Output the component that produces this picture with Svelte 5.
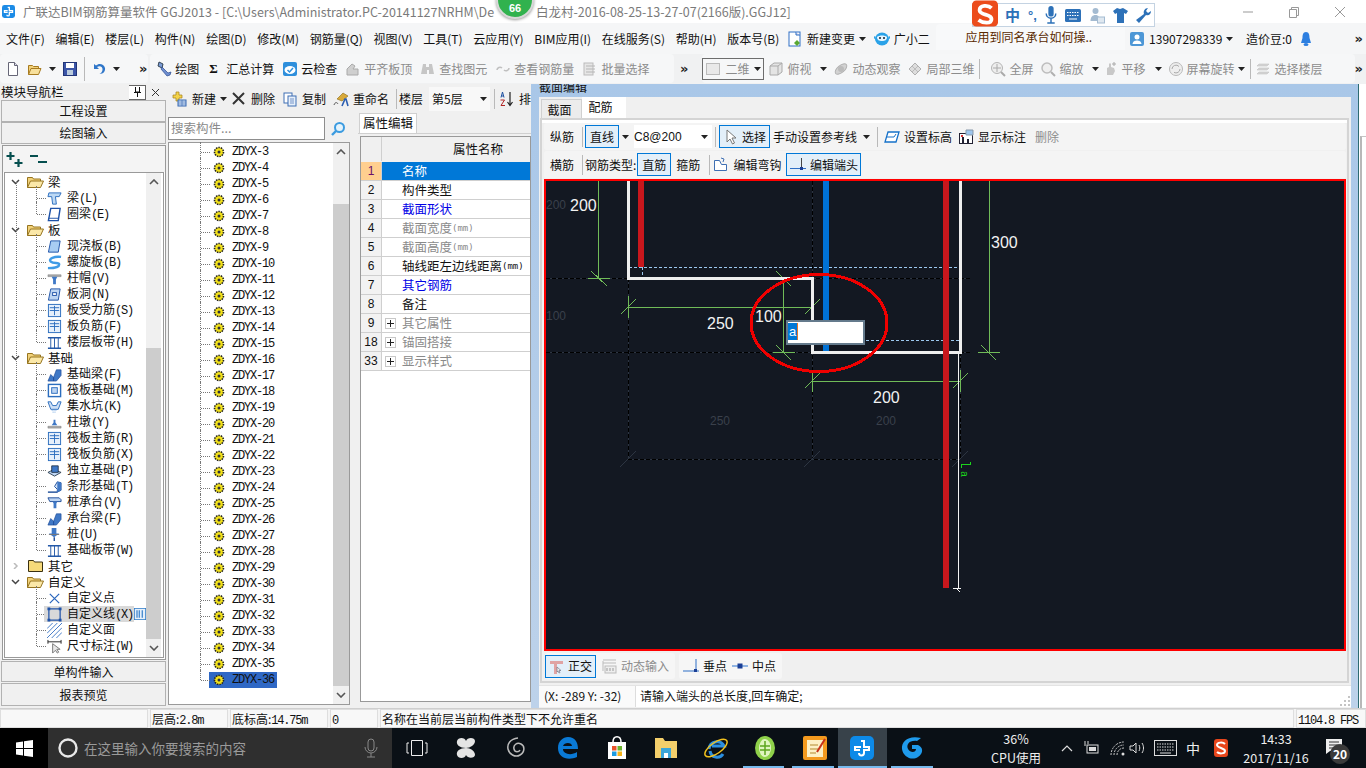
<script>
  const icons = {
    doc: '<path d="M3.500 1.500h6l3 3v10h-9z" fill="#fff" stroke="#667"/><path d="M9.500 1.500v3h3" fill="#dde" stroke="#667"/>',
    open: '<path d="M1.500 13.500v-9h4l1 1h5v2" fill="#f2d27a" stroke="#a77b20"/><path d="M1.500 13.500l2.500-6h10l-2.500 6z" fill="#f7e09c" stroke="#a77b20"/>',
    save: '<rect x="1.500" y="1.500" width="13" height="13" fill="#3b55a8" stroke="#223577"/><rect x="4" y="2" width="8" height="5" fill="#fff"/><rect x="5" y="9" width="6" height="5" fill="#bcd"/>',
    undo: '<path d="M3 3v5h5L6 6c3-2 6 0 5.500 3-.3 2-1.500 3-3 4 4 0 6-3 5.500-6C13 3 8 1.500 5 4.500z" fill="#2f76c9"/>',
    draw: '<path d="M3 1l4 2-1 4-4-2z" fill="#7a9bd6" stroke="#345"/><path d="M6 6l6 6 3-1-1 3-3 1-6-7z" fill="#6f8fd0" stroke="#2a4a90" stroke-width=".7"/>',
    cloudchk: '<rect x="1" y="1" width="14" height="14" rx="2" fill="#2e8fdc"/><ellipse cx="8" cy="9" rx="5.500" ry="4" fill="#fff"/><path d="M5.500 9l2 2 3.500-4" stroke="#2e8fdc" stroke-width="1.500" fill="none"/>',
    g1: '<path d="M2 14V8l5-5 3 2-2 3h5v6z" fill="#cfcfcf" stroke="#aaa"/>',
    binoc: '<path d="M3 3h3v3h3V3h3l2 10H9V9H7v4H1z" fill="#c6c6c6"/>',
    link: '<path d="M2 9a3 3 0 0 1 5-2M14 7a3 3 0 0 1-5 2" stroke="#c0c0c0" stroke-width="1.600" fill="none"/>',
    batch: '<rect x="2" y="2" width="9" height="12" fill="#e6e6e6" stroke="#bbb"/><path d="M4 5h9M4 8h9M4 11h9" stroke="#b6b6b6"/>',
    cube: '<path d="M2 5l4-3h8v9l-4 3H2z" fill="#e4e4e4" stroke="#aaa"/><path d="M2 5h8v9M10 5l4-3" stroke="#aaa" fill="none"/>',
    orbit: '<ellipse cx="8" cy="8" rx="7" ry="3.500" transform="rotate(-40 8 8)" fill="#d2d2d2" stroke="#b2b2b2"/><circle cx="8" cy="8" r="3" fill="#bbb"/>',
    local: '<path d="M2 8l6-6 6 6-6 6z" fill="#ddd" stroke="#b0b0b0"/><path d="M5 5l6 6M11 5l-6 6" stroke="#bbb"/>',
    zoomall: '<circle cx="7" cy="7" r="5.500" fill="#eee" stroke="#b5b5b5"/><path d="M7 3v8M3 7h8" stroke="#aaa"/><path d="M11 11l4 4" stroke="#aaa" stroke-width="2"/>',
    zoom: '<circle cx="7" cy="7" r="5" fill="#efefef" stroke="#bdbdbd" stroke-width="1.500"/><path d="M11 11l4 4" stroke="#b0b0b0" stroke-width="2"/>',
    pan: '<path d="M5 14V7l2-1V3l1-1 1 1v3l3 1 1 3-2 4z" fill="#c8c8c8"/><path d="M12 1v4M10 3h4" stroke="#aaa"/>',
    rotate: '<circle cx="8" cy="8" r="6.500" fill="#eee" stroke="#b9b9b9"/><path d="M4 8a4 4 0 0 1 7-2.500M12 8a4 4 0 0 1-6 3.400" stroke="#aaa" fill="none"/>',
    floors: '<path d="M3 3h10l-2 2H1zM3 7h10l-2 2H1zM3 11h10l-2 2H1z" fill="#d6d6d6" stroke="#bbb" stroke-width=".5"/>',
    plusbox: '<path d="M5 1h3v3h3v3H8v3H5V7H2V4h3z" fill="#f3d34a" stroke="#a3801a" stroke-width=".7"/><rect x="7" y="9" width="8" height="6" fill="#cfe0f5" stroke="#3566b0"/><path d="M7 11h8M7 13h8M11 9v6" stroke="#3566b0" stroke-width=".6"/>',
    copy: '<rect x="2" y="2" width="8" height="10" fill="#fff" stroke="#3f6fb3"/><rect x="6" y="5" width="8" height="10" fill="#e6effa" stroke="#3f6fb3"/><path d="M8 8h4M8 10h4M8 12h4" stroke="#3f6fb3" stroke-width=".7"/>',
    rename: '<path d="M4 8l6-6 5 3-6 5z" fill="#d8a93a" stroke="#8a6a14" stroke-width=".6"/><path d="M9 15l3-7h1l2 7" fill="none" stroke="#2a5db0" stroke-width="1.600"/><path d="M1 14c1-3 3-3 4-1" stroke="#555" fill="none"/>',
    sort: '<path d="M5 6.500L3.500 1 2 6.500M2.500 5h2" stroke="#1c4fa0" fill="none"/><path d="M1.500 9h4L2 14.500h4" stroke="#b02323" fill="none"/><path d="M11 1v13M8.500 11l2.500 3.500 2.500-3.500" stroke="#222" fill="none" stroke-width="1.200"/>',
    cursor: '<path d="M4 1v12l3-3 2.500 5 2-1L9 9h4z" fill="#fff" stroke="#777"/>',
    level: '<path d="M4 3h11l-3 10H1z" fill="#fff" stroke="#1671c9" stroke-width="1.300"/><path d="M3 8h7l2-3" stroke="#1671c9" fill="none"/>',
    label: '<rect x="1.500" y="4.500" width="13" height="10" fill="#fff" stroke="#223"/><path d="M5 8v6M10 10v4" stroke="#223" stroke-width="2"/><rect x="3" y="6" width="2" height="2" fill="#d33"/><path d="M8 1h7v5H8z" fill="#9ec6ee" stroke="#89a"/>',
    hook: '<path d="M1.500 3.500h5l2 4h5v6h-12z" fill="#fff" stroke="#3f6fb3"/><path d="M8 1l3 1-1 3" fill="none" stroke="#3f6fb3"/>',
    endcap: '<path d="M0 11.500h16" stroke="#2f6fc5"/><path d="M11.500 1v11" stroke="#444"/><rect x="10" y="10" width="3" height="3" fill="#1a3f96"/>',
    orth: '<path d="M1 3h13v3H8v10H5V6H1z" fill="#e0a3a3"/><path d="M8 9v5l1-1 1 2 1-.5-1-2h2z" fill="#eee" stroke="#778" stroke-width=".7"/>',
    dyn: '<path d="M2 2h13M2 5h13" stroke="#bbb"/><rect x="4" y="8" width="11" height="7" fill="#eee" stroke="#bbb"/><path d="M6 10v3M9 10v3M12 10v3" stroke="#999"/><path d="M2 3v10" stroke="#bbb"/>',
    perp: '<path d="M0 13h16" stroke="#2f6fc5"/><path d="M13 1v12" stroke="#2f6fc5"/><rect x="11" y="11" width="3" height="3" fill="#1a3f96"/>',
    mid: '<path d="M0 8h16" stroke="#6f9fdc" stroke-width="1.500"/><rect x="5.500" y="5.500" width="5" height="5" fill="#1a3f96"/>',
    note: '<rect x="2" y="1" width="11" height="14" fill="#fff" stroke="#2f6fc5"/><path d="M9 1v3h4" fill="#dde" stroke="#2f6fc5"/><path d="M10 9l3 3-3 3-3-3z" fill="#5aa832"/>',
    xiaoer: '<ellipse cx="8" cy="8" rx="7" ry="6.500" fill="#2aa2e8"/><path d="M3 6c2-2 8-2 10 0 0 3-2 4-5 4S3 9 3 6z" fill="#e7f6ff"/><circle cx="6" cy="7" r="1" fill="#123"/><circle cx="10" cy="7" r="1" fill="#123"/><path d="M1 8L0 5M15 8l1-3" stroke="#2aa2e8"/>',
    user: '<rect x="1" y="1" width="14" height="14" rx="2" fill="#4d97d6"/><circle cx="8" cy="6" r="2.500" fill="#fff"/><path d="M3.500 13c.5-3 2.500-3.500 4.500-3.500S12 10 12.500 13z" fill="#fff"/>',
    bell: '<path d="M8 1c3 0 3.500 3 3.500 6l1.500 5H3l1.500-5C4.500 4 5 1 8 1z" fill="#2d7fe0"/><ellipse cx="8" cy="13.500" rx="2.500" ry="1.500" fill="#2d7fe0"/>',
    // nav tree
    beam: '<path d="M2 2h13l-2 4H9l1 8H6L5 6H1z" fill="#bcd8f4" stroke="#2b6dbe"/>',
    ring: '<path d="M4 1.500h10l-2 13H1.500z" fill="#fff" stroke="#1e52a8" stroke-width="1.500"/><path d="M1.500 12h11" stroke="#1e52a8"/>',
    slab: '<path d="M4 2h10l-2 12H1.500z" fill="#a8ccf2" stroke="#1e52a8"/>',
    spiral: '<path d="M15 2C8 1 1 4 4 7s9 0 9 3-7 4-12 4" stroke="#3f9be6" stroke-width="2.600" fill="none"/>',
    cap: '<path d="M1 4h14v2H1z" fill="#aaa" stroke="#777" stroke-width=".5"/><path d="M5 6h6l-1.500 3h-3zM6.500 9h3v5h-3z" fill="#3f78c6"/>',
    hole: '<path d="M4 2h10l-2 12H1.500z" fill="#bcd4f2" stroke="#1e52a8"/><rect x="6" y="6" width="4" height="3" fill="#fff" stroke="#1e52a8"/>',
    grid: '<rect x="1.500" y="1.500" width="13" height="13" fill="#e5effb" stroke="#2b6dbe"/><path d="M8 3v10M3 8h10M3 5h10" stroke="#2b6dbe"/>',
    band: '<path d="M1 3h14M1 14h14" stroke="#2459a8" stroke-width="1.600"/><path d="M4 3v11M8 3v11M12 3v11" stroke="#2459a8"/>',
    fbeam: '<path d="M1 15l3-7 3 3V15zM7 11l3-8h5v6l-5 6H7z" fill="#3f78c6" stroke="#1e4d99" stroke-width=".7"/>',
    raft: '<rect x="1.500" y="1.500" width="13" height="13" fill="#fff" stroke="#2b6dbe" stroke-width="1.500"/><rect x="5" y="5" width="6" height="6" fill="#bcd4f2" stroke="#2b6dbe"/>',
    pit: '<path d="M1 3h3l2 4h4l2-4h3l-3 8H4z" fill="#cfe0f5" stroke="#2b6dbe"/><path d="M5 12h6M6 14h4" stroke="#6aa0de" stroke-dasharray="1 1"/>',
    pier: '<path d="M1 12h14v2H1z" fill="#aaa" stroke="#777" stroke-width=".5"/><path d="M5 11l2-3V5h2v3l2 3z" fill="#3f78c6"/>',
    iso: '<path d="M1 10l6-3 8 3-7 4z" fill="#bcd4f2" stroke="#345"/><path d="M5 3h7v7H5z" fill="#3f78c6" stroke="#123" stroke-width=".8"/>',
    strip: '<path d="M1 14h10v-3L8 8l3-5 4 1v8l-4 2z" fill="#cfe0f5" stroke="#1e4d99"/><path d="M11 3l4 1v8l-4 2z" fill="#3f78c6"/>',
    ptcap: '<path d="M1 3h12l2 2v2H3z" fill="#bcd4f2" stroke="#1e4d99"/><path d="M6 7h5l-1 2H7zM7 9h3v5H7z" fill="#3f78c6"/>',
    pile: '<path d="M5 1h5v6h3l-5.500 4L2 7h3z" fill="#3f78c6"/><path d="M7 11h1.500v4H7z" fill="#1e4d99"/><path d="M2 8h11" stroke="#777"/>',
    point: '<path d="M3 3l10 10M13 3L3 13" stroke="#2a66bd" stroke-width="1.300"/>',
    line: '<rect x="2" y="2" width="12" height="12" fill="none" stroke="#1e52a8" stroke-width="1.300"/><g fill="#1e52a8"><rect x="0.500" y=".5" width="3" height="3"/><rect x="12.500" y=".5" width="3" height="3"/><rect x=".5" y="12.500" width="3" height="3"/><rect x="12.500" y="12.500" width="3" height="3"/></g>',
    hatch: '<path d="M0 6l6-6M0 11L11 0M0 16L16 0M5 16L16 5M10 16l6-6" stroke="#3f78c6"/>',
    dim: '<path d="M1 1v4M15 1v4M1 3h14" stroke="#222"/><path d="M6 5v10l3-3 2 3 1.500-1-2-3h3.500z" fill="#e8e8e8" stroke="#777"/>',
    side: '<rect x=".5" y=".5" width="15" height="15" fill="#e6f0fb" stroke="#2a78c6"/><path d="M4 3v10M11 3v10M7 3v10" stroke="#2a78c6" stroke-width="1.500"/>'
  };

  const menus = ['文件(F)','编辑(E)','楼层(L)','构件(N)','绘图(D)','修改(M)','钢筋量(Q)','视图(V)','工具(T)','云应用(Y)','BIM应用(I)','在线服务(S)','帮助(H)','版本号(B)'];

  // ml = gap to the previous item, as measured on the reference
  const leftTools = [
    { ic: 'draw', t: '绘图', ml: 6 },
    { sig: true, t: '汇总计算', ml: 10 },
    { ic: 'cloudchk', t: '云检查', ml: 8 },
    { ic: 'g1', t: '平齐板顶', off: true, ml: 8 },
    { ic: 'binoc', t: '查找图元', off: true, ml: 8 },
    { ic: 'link', t: '查看钢筋量', off: true, ml: 8 },
    { ic: 'batch', t: '批量选择', off: true, ml: 8 }
  ];
  const rightTools = [
    { ic: 'cube', t: '俯视', off: true, ml: 4, drop: true },
    { ic: 'orbit', t: '动态观察', off: true, ml: 6 },
    { ic: 'local', t: '局部三维', off: true, ml: 7 },
    { sep: true },
    { ic: 'zoomall', t: '全屏', off: true, ml: 5 },
    { ic: 'zoom', t: '缩放', off: true, ml: 7, drop: true },
    { ic: 'pan', t: '平移', off: true, ml: 3, drop: true },
    { ic: 'rotate', t: '屏幕旋转', off: true, ml: 6, drop: true, tight: true },
    { sep: true },
    { ic: 'floors', t: '选择楼层', off: true, ml: 0 }
  ];

  const groups = [
    { name: '梁', open: true, line: true, kids: [['beam','梁','(L)'],['ring','圈梁','(E)']] },
    { name: '板', open: true, line: true, kids: [['slab','现浇板','(B)'],['spiral','螺旋板','(B)'],['cap','柱帽','(V)'],['hole','板洞','(N)'],['grid','板受力筋','(S)'],['grid','板负筋','(F)'],['band','楼层板带','(H)']] },
    { name: '基础', open: true, line: true, kids: [['fbeam','基础梁','(F)'],['raft','筏板基础','(M)'],['pit','集水坑','(K)'],['pier','柱墩','(Y)'],['grid','筏板主筋','(R)'],['grid','筏板负筋','(X)'],['iso','独立基础','(P)'],['strip','条形基础','(T)'],['ptcap','桩承台','(V)'],['fbeam','承台梁','(F)'],['pile','桩','(U)'],['band','基础板带','(W)']] },
    { name: '其它', open: false, kids: [] },
    { name: '自定义', open: true, kids: [['point','自定义点',''],['line','自定义线','(X)'],['hatch','自定义面',''],['dim','尺寸标注','(W)']] }
  ];

  const zdyx = Array.from({ length: 34 }, (_, i) => 'ZDYX-' + (i + 3));

  const props = [
    { n: 1, t: '名称', sel: true },
    { n: 2, t: '构件类型' },
    { n: 3, t: '截面形状', c: 'blue' },
    { n: 4, t: '截面宽度', u: '(mm)', c: 'grey' },
    { n: 5, t: '截面高度', u: '(mm)', c: 'grey' },
    { n: 6, t: '轴线距左边线距离', u: '(mm)' },
    { n: 7, t: '其它钢筋', c: 'blue' },
    { n: 8, t: '备注' },
    { n: 9, t: '其它属性', c: 'grey', plus: true },
    { n: 18, t: '锚固搭接', c: 'grey', plus: true },
    { n: 33, t: '显示样式', c: 'grey', plus: true }
  ];

  // grid lines of the section, in page coordinates
  const gridLines = [
    [546, 279, 970, 279], [546, 353, 970, 353], [628, 460, 960, 460],
    [628, 279, 628, 460], [812, 182, 812, 460], [960, 353, 960, 460]
  ];
  const diag = [[628, 460], [812, 460], [960, 460]];
</script>

{#snippet icon(n, s = 16)}
  <svg class="ic" width={s} height={s} viewBox="0 0 16 16">{@html icons[n]}</svg>
{/snippet}

{#snippet caret()}
  <svg class="caret" width="7" height="4" viewBox="0 0 7 4"><path d="M0 0h7L3.500 4z" fill="#222" /></svg>
{/snippet}

{#snippet scrollbar(cls)}
  <div class="sb {cls}">
    <svg width="10" height="6" viewBox="0 0 10 6"><path d="M1 5l4-4 4 4" stroke="#555" stroke-width="1.600" fill="none" /></svg>
    <div class="sb-track"><div class="sb-thumb"></div></div>
    <svg width="10" height="6" viewBox="0 0 10 6"><path d="M1 1l4 4 4-4" stroke="#555" stroke-width="1.600" fill="none" /></svg>
  </div>
{/snippet}

<div class="app">
  <header class="title">
    <svg class="ic logo" width="13" height="13" viewBox="0 0 16 16"><rect width="16" height="16" rx="3" fill="#1c8be6" /><path d="M7 3h2v4h4v2H9v3a1.500 1.500 0 0 1-3 0M7 9H3V7h4" fill="none" stroke="#fff" stroke-width="1.600" /></svg>
    <span class="t1">广联达BIM钢筋算量软件 GGJ2013 - [C:\Users\Administrator.PC-20141127NRHM\De</span>
    <span class="t2">白龙村-2016-08-25-13-27-07(2166版).GGJ12]</span>
    <div class="winbtns">
      <svg width="12" height="12" viewBox="0 0 12 12"><path d="M1 6h10" stroke="#999" /></svg>
      <svg width="12" height="12" viewBox="0 0 12 12"><path d="M1.500 3.500h7v8h-7zM3.500 3.500v-2h7v8h-2" stroke="#999" fill="none" /></svg>
      <svg width="12" height="12" viewBox="0 0 12 12"><path d="M1 1l10 10M11 1L1 11" stroke="#999" /></svg>
    </div>
  </header>

  <nav class="menu">
    {#each menus as m}<span>{m}</span>{/each}
    <span class="with-ic new">{@render icon('note')}新建变更 {@render caret()}</span>
    <span class="with-ic xiao">{@render icon('xiaoer')}广小二</span>
    <div class="ask">应用到同名承台如何操..</div>
    <span class="with-ic acct">{@render icon('user')}13907298339 {@render caret()}</span>
    <span class="bean">造价豆:0</span>
    {@render icon('bell')}
    <span class="more">»</span>
  </nav>

  <div class="tools">
    <div class="tgroup first">
      {@render icon('doc')}
      {@render icon('open')}
      {@render caret()}
      {@render icon('save')}
      <i class="sep"></i>
      {@render icon('undo')}
      {@render caret()}
      <span class="more">»</span>
    </div>
    <div class="tgroup second">
      {#each leftTools as it}
        <span class="tool" class:off={it.off} style="margin-left:{it.ml}px">
          {#if it.sig}<b class="sig">Σ</b>{:else}{@render icon(it.ic)}{/if}{it.t}
        </span>
      {/each}
    </div>
    <span class="more mid-more">»</span>
    <div class="tgroup third">
      <div class="dim2"><i></i>二维 {@render caret()}</div>
      {#each rightTools as it}
        {#if it.sep}
          <i class="sep"></i>
        {:else}
          <span class="tool off" class:tight={it.tight} style="margin-left:{it.ml}px">{@render icon(it.ic)}{it.t}{#if it.drop}{@render caret()}{/if}</span>
        {/if}
      {/each}
    </div>
    <span class="more end-more">»</span>
  </div>

  <main class="main">
    <aside class="nav">
      <div class="nav-head">
        <span>模块导航栏</span>
        <span class="pin">
          <svg width="9" height="11" viewBox="0 0 9 11"><path d="M2.500 1v5h4V1M1 6.500h7M4.500 7v4" stroke="#111" fill="none" /></svg>
        </span>
        <svg class="close" width="9" height="9" viewBox="0 0 9 9"><path d="M1 1l7 7M8 1L1 8" stroke="#333" /></svg>
      </div>
      <button class="navbtn h22">工程设置</button>
      <button class="navbtn h22 gapb">绘图输入</button>
      <div class="nav-body">
        <div class="expand">
          <svg width="17" height="17" viewBox="0 0 17 17"><path d="M4.500 1v8M.5 5h8M12.500 8v8M8.500 12h8" stroke="#064f4f" stroke-width="2.200" /></svg>
          <svg width="17" height="17" viewBox="0 0 17 17"><path d="M0 5h8M8 11h9" stroke="#064f4f" stroke-width="2.200" /></svg>
        </div>
        <div class="nav-tree">
          <div class="tree-rows">
            {#each groups as g}
              <div class="grp" class:haskids={g.line}>
                <div class="grow">
                  <svg class="chev" width="9" height="6" viewBox="0 0 9 6">
                    {#if g.open}<path d="M1 1l3.500 3.500L8 1" stroke="#444" stroke-width="1.500" fill="none" />{:else}<path d="M3 0l3 3-3 3" stroke="#bbb" stroke-width="1.500" fill="none" />{/if}
                  </svg>
                  <svg class="ic" width="17" height="14" viewBox="0 0 17 14">
                    {#if g.open}
                      <path d="M.5 12.500v-10h5l1 1.500h7v2" fill="#f2d27a" stroke="#96741f" />
                      <path d="M.5 12.500l3-6.500h13l-3 6.500z" fill="#fbe8a8" stroke="#96741f" />
                    {:else}
                      <path d="M1.500 12.500v-11h5l1 1.500h8v9.500z" fill="#f6d97a" stroke="#3a3010" />
                    {/if}
                  </svg>
                  <span class="gname">{g.name}</span>
                </div>
                {#each g.kids as k, i}
                  <div class="kid" class:last={i === g.kids.length - 1}>
                    <i class="hook"></i>
                    <span class="kbody" class:cur={k[1] === '自定义线'}>
                      {@render icon(k[0], 15)}
                      <span class="ktext">{k[1]}<span class="mono">{k[2]}</span></span>
                    </span>
                    {#if k[1] === '自定义线'}<span class="side">{@render icon('side', 12)}</span>{/if}
                  </div>
                {/each}
              </div>
            {/each}
          </div>
          {@render scrollbar('nav-sb')}
        </div>
      </div>
      <button class="navbtn h21 gapb">单构件输入</button>
      <button class="navbtn h23">报表预览</button>
    </aside>

    <section class="mid">
      <div class="mid-tools">
        <span class="mtool new-t">{@render icon('plusbox')}新建{@render caret()}</span>
        <span class="mtool del-t">
          <svg class="ic" width="13" height="13" viewBox="0 0 13 13"><path d="M1 1l11 11M12 1L1 12" stroke="#333" stroke-width="2" /></svg>删除
        </span>
        <span class="mtool">{@render icon('copy')}复制</span>
        <span class="mtool">{@render icon('rename')}重命名</span>
        <i class="sep"></i>
        <span class="floor-l">楼层</span>
        <span class="floor">第5层{@render caret()}</span>
        <i class="sep sep2"></i>
        <span class="mtool">{@render icon('sort')}排</span>
      </div>
      <div class="mid-cols">
        <div class="list">
          <div class="search">
            <div class="search-in">搜索构件...</div>
            <svg width="16" height="16" viewBox="0 0 16 16"><circle cx="9.500" cy="6.500" r="4.500" fill="#e4f3fc" stroke="#3b9be0" stroke-width="2" /><path d="M6 10l-4 4" stroke="#3b9be0" stroke-width="2.400" /></svg>
          </div>
          <div class="list-body">
            <div class="zrows">
              {#each zdyx as z, i}
                <div class="zrow" class:lastz={i === zdyx.length - 1}>
                  <i class="hook"></i>
                  <span class="zbody" class:zsel={i === zdyx.length - 1}>
                    <svg class="ic" width="12" height="12" viewBox="0 0 12 12">
                      <circle cx="6" cy="6" r="4.500" fill="#f3e21a" stroke="#222" stroke-dasharray="1.500 1" stroke-width="1.600" /><circle cx="6" cy="6" r="1.500" fill="#333" />
                    </svg>
                    <span class="zname mono">{z}</span>
                  </span>
                </div>
              {/each}
            </div>
            {@render scrollbar('list-sb')}
          </div>
        </div>
        <div class="props">
          <div class="tabline"><span class="ptab">属性编辑</span></div>
          <div class="ptable">
            <div class="prow phead"><div class="pno"></div><div class="pname">属性名称</div></div>
            {#each props as p}
              <div class="prow">
                <div class="pno" class:psel={p.sel}>{p.n}</div>
                <div class="pname {p.c ?? ''}" class:pcur={p.sel}>
                  {#if p.plus}<i class="plus"></i>{/if}
                  {p.t}{#if p.u}<span class="unit">{p.u}</span>{/if}
                </div>
              </div>
            {/each}
          </div>
        </div>
      </div>
    </section>

    <section class="editor">
      <div class="ed-title">截面编辑</div>
      <div class="ed-body">
        <div class="ed-tabs"><span class="etab">截面</span><span class="etab on">配筋</span></div>
        <div class="ed-pane">
          <div class="ed-bar">
            <span class="lbl lead">纵筋</span><i class="sep"></i>
            <span class="box w34 nudge">直线</span>{@render caret()}
            <span class="combo">C8@200{@render caret()}</span><i class="sep"></i>
            <span class="box sel-tool">{@render icon('cursor')}选择</span>
            <span class="lbl">手动设置参考线</span><span class="caret-wrap">{@render caret()}</span><i class="sep sep-r"></i>
            <span class="lbl gap">{@render icon('level')}设置标高</span>
            <span class="lbl gap">{@render icon('label')}显示标注</span>
            <span class="lbl grey-t del">删除</span>
          </div>
          <div class="ed-bar">
            <span class="lbl lead">横筋</span><i class="sep"></i>
            <span class="lbl nudge">钢筋类型:</span>
            <span class="box w34 kind">直筋</span>
            <span class="lbl manual">箍筋</span><i class="sep sep-k"></i>
            <span class="lbl hk">{@render icon('hook')}编辑弯钩</span>
            <span class="box cap-tool">{@render icon('endcap')}编辑端头</span>
          </div>

          <div class="canvas">
            <svg width="798" height="468" viewBox="546 182 798 468" shape-rendering="crispEdges">
              {#each gridLines as l}
                <line x1={l[0]} y1={l[1]} x2={l[2]} y2={l[3]} stroke="#2d3542" />
                <line x1={l[0]} y1={l[1]} x2={l[2]} y2={l[3]} stroke="#000" stroke-dasharray="4 2" />
              {/each}
              {#each diag as d}
                <line x1={d[0] - 8} y1={d[1] + 8} x2={d[0] + 8} y2={d[1] - 8} stroke="#2d3542" />
              {/each}

              <g fill="#3a404b" font-family="Liberation Sans, sans-serif" font-size="12">
                <text x="546" y="210">200</text>
                <text x="546" y="321">100</text>
                <text x="710" y="426">250</text>
                <text x="876" y="426">200</text>
              </g>

              <path d="M598 182v97M588 279h22M591 272l16 15M628 297v22M621 315l15-15M812 297v22M805 315l15-15M628 308h184M783 279v74M773 279h22M776 272l15 15M773 353h22M776 346l15 15M812 371v22M805 389l15-15M960 371v22M953 389l15-15M812 382h148M989 182v171M978 353h22M981 346l15 15" stroke="#70bb58" fill="none" />

              <path d="M629 268h331M642 268v11M866 341h94" stroke="#9cc8ee" stroke-dasharray="3 2" fill="none" />

              <rect x="638" y="182" width="6" height="86" fill="#c8171d" />
              <rect x="823" y="182" width="6" height="171" fill="#0072d6" />
              <path d="M628.500 182v97.500h184v73.500h147.500v-171" stroke="#eeeeee" stroke-width="3" fill="none" />
              <rect x="943" y="182" width="6" height="407" fill="#c8171d" />
              <path d="M958.500 353v236M953 589h8M957 590l3 3" stroke="#f4f4f4" fill="none" />
              <path d="M961.500 469v-4h9v-2" stroke="#1bd41b" fill="none" />
              <text x="0" y="0" transform="translate(961 472) rotate(90)" fill="#1bd41b" font-size="10" font-family="Liberation Mono, monospace">a</text>

              <g fill="#f2f2f2" font-family="Liberation Sans, sans-serif" font-size="16">
                <text x="570" y="212">200</text>
                <text x="707" y="330">250</text>
                <text x="755" y="323">100</text>
                <text x="873" y="404">200</text>
                <text x="991" y="249">300</text>
              </g>

              <ellipse cx="819" cy="324" rx="68" ry="48.500" fill="none" stroke="#f00000" stroke-width="3" />
            </svg>
            <div class="len-input"><span>a</span></div>
          </div>

          <div class="ed-bottom">
            <div class="snap">
              <span class="box orth">{@render icon('orth')}正交</span>
              <span class="lbl grey-t">{@render icon('dyn')}动态输入</span>
            </div>
            <div class="snap">
              <span class="lbl">{@render icon('perp')}垂点</span>
              <span class="lbl">{@render icon('mid')}中点</span>
            </div>
          </div>
        </div>
        <div class="ed-status">
          <span class="coord">(X: -289 Y: -32)</span>
          <span class="hint">请输入端头的总长度,回车确定;</span>
          <svg class="grip" width="11" height="11" viewBox="0 0 11 11"><path d="M8 1h2v2H8zM4 5h2v2H4zM8 5h2v2H8zM0 9h2v2H0zM4 9h2v2H4zM8 9h2v2H8z" fill="#c4c4c4" /></svg>
        </div>
      </div>
    </section>
    <div class="rim"><div class="rim-in"></div></div>
  </main>

  <footer class="status">
    <span class="cell c1"></span>
    <span class="cell c2">层高:<span class="mono">2.8m</span></span>
    <span class="cell c3">底标高:<span class="mono">14.75m</span></span>
    <span class="cell c4"><span class="mono">0</span></span>
    <span class="cell c5">名称在当前层当前构件类型下不允许重名</span>
    <span class="cell c6"><span class="mono">1104.8 FPS</span></span>
  </footer>

  <div class="taskbar">
    <div class="start">
      <svg width="17" height="17" viewBox="0 0 17 17"><path d="M0 2.500l7-1v6.500H0zM8 1.300L17 0v8H8zM0 9h7v6.500l-7-1zM8 9h9v8l-9-1.300z" fill="#fff" /></svg>
    </div>
    <div class="tsearch">
      <svg width="22" height="22" viewBox="0 0 22 22"><circle cx="11" cy="11" r="8.500" fill="none" stroke="#e8e8e8" stroke-width="2.400" /></svg>
      <span>在这里输入你要搜索的内容</span>
      <svg class="tmic" width="14" height="20" viewBox="0 0 14 20"><rect x="4" y="1" width="6" height="12" rx="3" fill="none" stroke="#888" /><path d="M1 9a6 6 0 0 0 12 0M7 15v4M3 19h8" stroke="#888" fill="none" /></svg>
    </div>
    <div class="tapps">
      <span class="tapp"><svg width="22" height="18" viewBox="0 0 22 18"><path d="M5.500 1.500h11v15h-11zM3 4H1v10h2M19 4h2v10h-2" fill="none" stroke="#eee" /></svg></span>
      <span class="tapp"><svg width="24" height="24" viewBox="0 0 24 24"><path d="M12 12C6 12 2 9 3 5s8-4 9 0c1-4 9-4 9 0s-5 7-9 7c6 0 9 4 9 7s-7 4-9 0c-1 4-8 4-9 0s3-7 9-7z" fill="#e4e4e4" /></svg></span>
      <span class="tapp"><svg width="22" height="24" viewBox="0 0 22 24"><path d="M13 2C5 3 2 8 3 13s7 9 12 6 5-9 1-11-8 1-7 5 5 3 6 1" fill="none" stroke="#bbb" stroke-width="1.500" /></svg></span>
      <span class="tapp shift"><svg width="24" height="24" viewBox="0 0 24 24"><path d="M3 12C3 5 8 1 13 1c7 0 10 5 10 12H8c0 5 8 7 14 3v5c-9 4-19 1-19-9zm5-2h9c0-4-8-4-9 0z" fill="#0a7ad6" /></svg></span>
      <span class="tapp shift"><svg width="24" height="26" viewBox="0 0 24 26"><path d="M3 7h18v17H3z" fill="#fff" /><path d="M8 7c0-7 8-7 8 0" fill="none" stroke="#fff" stroke-width="1.500" /><rect x="7" y="11" width="4.500" height="4.500" fill="#e8532b" /><rect x="12.500" y="11" width="4.500" height="4.500" fill="#6bb42d" /><rect x="7" y="16.500" width="4.500" height="4.500" fill="#1b9be3" /><rect x="12.500" y="16.500" width="4.500" height="4.500" fill="#f4b21a" /></svg></span>
      <span class="tapp shift"><svg width="24" height="24" viewBox="0 0 24 24"><path d="M1 2h8l2 3h12v17H1z" fill="#f3cf6b" /><rect x="7" y="12" width="10" height="10" fill="#3ba6d9" /><rect x="10" y="17" width="4" height="5" fill="#fff" /></svg></span>
      <span class="tapp shift"><svg width="26" height="26" viewBox="0 0 26 26"><path d="M6 14a8 8 0 0 1 15-3H9m-2 5c1 7 10 8 13 3" fill="none" stroke="#2c8fe0" stroke-width="3" /><ellipse cx="13" cy="13" rx="13" ry="5.500" transform="rotate(-35 13 13)" fill="none" stroke="#f2c21e" stroke-width="1.500" /></svg></span>
      <span class="tapp ul shift"><svg width="24" height="26" viewBox="0 0 24 26"><ellipse cx="12" cy="13" rx="10" ry="12" fill="#8fd14a" /><ellipse cx="12" cy="13" rx="6" ry="9" fill="#dff5c0" /><path d="M7 11h10M7 15h10M12 6v14" stroke="#5da51f" stroke-width="1.500" /></svg></span>
      <span class="tapp ul shift"><svg width="24" height="24" viewBox="0 0 24 24"><rect width="24" height="24" rx="2" fill="#f49a1e" /><rect x="4" y="4" width="16" height="17" fill="#fdf0c6" /><path d="M7 9h8M7 13h8M7 17h6" stroke="#b2892f" /><path d="M14 16l8-13" stroke="#c8321a" stroke-width="2" /></svg></span>
      <span class="tapp ul act"><svg width="24" height="24" viewBox="0 0 24 24"><rect width="24" height="24" rx="5" fill="#0d8ae8" /><path d="M11 5h3v6h5v3h-5v3a2 2 0 0 1-5 0M10 14H5v-3h6" fill="none" stroke="#fff" stroke-width="2" /></svg></span>
      <span class="tapp ul"><svg width="26" height="26" viewBox="0 0 26 26"><path d="M22 3C10 0 2 6 3 14s10 12 16 8 5-10 0-12h-6v4h4c0 4-6 4-8 0s1-9 9-8z" fill="#1f9bec" /></svg></span>
    </div>
    <div class="tray">
      <div class="cpu"><span>36%</span><span>CPU使用</span></div>
      <svg class="trayic" width="12" height="8" viewBox="0 0 12 8"><path d="M1 7l5-5 5 5" stroke="#ddd" stroke-width="1.200" fill="none" /></svg>
      <svg class="trayic" width="16" height="14" viewBox="0 0 16 14"><rect x="4" y="4" width="11" height="8" fill="none" stroke="#ddd" /><rect x="6" y="6" width="7" height="4" fill="#ddd" /><path d="M2 0v5M5 0v3" stroke="#ddd" /></svg>
      <svg class="trayic" width="16" height="16" viewBox="0 0 16 16"><path d="M2 15a13 13 0 0 1 13-13M5 15a10 10 0 0 1 10-10M8 15a7 7 0 0 1 7-7" stroke="#ccc" stroke-dasharray="2 1" fill="none" /><circle cx="14" cy="14" r="1.500" fill="#ddd" /></svg>
      <svg class="trayic vol" width="16" height="16" viewBox="0 0 16 16"><path d="M1 6h3l3-3v10l-3-3H1z" fill="none" stroke="#ddd" /><path d="M10 5c1 2 1 4 0 6M13 3c2 3 2 7 0 10" stroke="#ddd" fill="none" /></svg>
      <svg class="trayic kb" width="23" height="16" viewBox="0 0 23 16"><rect x=".5" y=".5" width="22" height="15" fill="none" stroke="#ddd" /><path d="M3 4h17M3 7h17M3 10h17" stroke="#ddd" stroke-dasharray="1.500 1" /><path d="M6 13h11" stroke="#ddd" /></svg>
      <span class="zh">中</span>
      <svg class="trayic sg" width="14" height="18" viewBox="0 0 14 18"><rect width="14" height="18" rx="3" fill="#e8461c" /><path d="M11 5C9 3 3 3 3 6s8 3 8 6-6 3-8 1" fill="none" stroke="#fff" stroke-width="2" /></svg>
      <div class="clock"><span>14:33</span><span>2017/11/16</span></div>
      <div class="notify">
        <svg width="16" height="15" viewBox="0 0 16 15"><path d="M0 0h16v12H4l-4 3z" fill="#eee" /><path d="M3 3h10M3 6h10M3 9h7" stroke="#333" /></svg>
        <b>20</b>
      </div>
    </div>
  </div>

  <!-- overlays: badge of the speed-up widget and the input-method bar -->
  <div class="badge">66</div>
  <div class="ime">
    <svg class="ime-s" width="26" height="27" viewBox="0 0 24 24"><rect width="24" height="24" rx="4" fill="#ec4c1c" /><path d="M18 7C15 4 7 4 7 9s11 3 11 8-8 4-12 1" fill="none" stroke="#fff" stroke-width="3.500" /></svg>
    <span class="ime-z">中</span>
    <span class="ime-p">°,</span>
    <svg width="12" height="18" viewBox="0 0 11 17"><rect x="3" y="0" width="5" height="10" rx="2.500" fill="#2d71b8" /><path d="M1 7a4.500 4.500 0 0 0 9 0M5.500 12v4M2 16h7" stroke="#2d71b8" fill="none" stroke-width="1.400" /></svg>
    <svg width="16" height="13" viewBox="0 0 16 13"><rect width="16" height="13" rx="1.500" fill="#2d71b8" /><path d="M2 3.500h12M2 6.500h12" stroke="#fff" stroke-dasharray="1.500 1" /><path d="M4 10h8" stroke="#fff" /></svg>
    <svg width="16" height="17" viewBox="0 0 15 17"><circle cx="6" cy="4" r="3" fill="#a4bbd1" /><path d="M1 14c0-4 2-6 5-6s4 2 4 6z" fill="#a4bbd1" /><rect x="8" y="10" width="7" height="6" fill="#dfe8f0" stroke="#a4bbd1" /></svg>
    <svg width="15" height="15" viewBox="0 0 15 15"><path d="M4 0l3 1 3-1 5 3-2 3-2-1v10H4V5L2 6 0 3z" fill="#2d71b8" /></svg>
    <svg width="15" height="15" viewBox="0 0 15 15"><path d="M15 3c0 3-2 5-5 4l-7 8-3-3 8-6C7 3 9 0 12 0l-2 3 2 2z" fill="#2d71b8" /></svg>
  </div>
</div>

<style>
  :global(body) { margin: 0; background: #f0f0f0; }

  .app {
    position: relative;
    width: 1366px;
    height: 768px;
    overflow: hidden;
    display: flex;
    flex-direction: column;
    background: #f0f0f0;
    color: #111;
    font: 12px/16px "Noto Sans CJK SC", "Liberation Sans", sans-serif;
  }

  .ic { flex: none; display: block; }
  .caret { flex: none; }
  .sep { flex: none; width: 1px; height: 20px; background: #b9b9b9; margin: 0 5px; }
  .more { font: bold 13px/10px "DejaVu Sans", sans-serif; color: #222; }
  .mono { font-family: "Liberation Mono", "Noto Sans CJK SC", monospace; font-size: 12px; letter-spacing: -1.200px; }

  /* title */
  .title {
    height: 23px;
    flex: none;
    display: flex;
    align-items: center;
    background: #fff;
    color: #7a7a7a;
    font-size: 12.500px;
    white-space: nowrap;
  }
  .logo { margin: 0 8px 0 2px; }
  .t1 { width: 513px; flex: none; }
  .winbtns { margin-left: auto; display: flex; gap: 34px; padding-right: 20px; }

  /* menu */
  .menu {
    height: 31px;
    flex: none;
    display: flex;
    align-items: center;
    gap: 10.700px;
    padding: 0 0 0 6px;
    background: #f5f6f7;
    white-space: nowrap;
  }
  .with-ic { display: flex; align-items: center; gap: 4px; }
  .new { margin-left: -3px; }
  .xiao { margin-left: -3px; }
  .ask {
    align-self: stretch;
    margin: 1px 0 4px -4px;
    width: 189px;
    padding-left: 29px;
    box-sizing: border-box;
    display: flex;
    align-items: center;
    background: #f8f9fa;
    color: #5a2a00;
    border-radius: 4px 4px 0 0;
  }
  .acct { margin-left: -7px; }
  .bean { margin-left: 2px; }
  .menu > .ic { margin-left: -5px; }
  .menu > .more { margin-left: auto; padding-right: 3px; }

  /* main toolbar */
  .tools {
    height: 30px;
    flex: none;
    display: flex;
    align-items: center;
    background: #f0f1f2;
    white-space: nowrap;
  }
  .tgroup {
    height: 29px;
    margin-bottom: 1px;
    box-sizing: border-box;
    display: flex;
    align-items: center;
    background: #f6f7f8;
    border-radius: 4px;
  }
  .first { width: 150px; gap: 6px; padding-left: 5px; }
  .first .sep { margin: 0; height: 24px; }
  .first .more { margin-left: 13px; }
  .second { width: 530px; margin-left: 2px; }
  .tool { display: flex; align-items: center; gap: 3px; }
  .tool.off { color: #8c8c8c; }
  .tool .caret { margin-left: 6px; }
  .tool.tight .caret { margin-left: 0; }
  .sig { width: 12px; font: bold 13px "Liberation Serif", serif; margin-right: 2px; }
  .mid-more { margin-left: 6px; }
  .third { width: 660px; margin-left: 14px; }
  .dim2 {
    width: 62px;
    height: 22px;
    box-sizing: border-box;
    display: flex;
    align-items: center;
    gap: 5px;
    border: 1px solid #6d6d6d;
    color: #8c8c8c;
    padding-left: 3px;
  }
  .dim2 i { width: 14px; height: 12px; background: #e9e9e9; border: 1px solid #bbb; box-sizing: border-box; }
  .end-more { margin-left: auto; padding-right: 3px; }

  /* page */
  .main { flex: 1; min-height: 0; display: flex; }

  /* navigation column */
  .nav { width: 167px; flex: none; display: flex; flex-direction: column; padding: 0 1px 2px; box-sizing: border-box; }
  .nav-head { height: 16px; flex: none; display: flex; align-items: center; }
  .nav-head span:first-child { flex: 1; font-size: 12.500px; }
  .pin {
    width: 16px;
    height: 13px;
    display: flex;
    justify-content: center;
    border: 1px solid #666;
    border-width: 1px 1px 1px 0;
    background: #fff;
  }
  .close { margin: 0 6px 0 5px; }
  .navbtn {
    flex: none;
    padding: 0;
    background: #f0f0f0;
    border: 1px solid #b2b2b2;
    font: inherit;
    color: #111;
  }
  .h21 { height: 21px; }
  .h22 { height: 22px; }
  .h23 { height: 23px; }
  .gapb { margin-bottom: 1px; }
  .nav-body { flex: 1; min-height: 0; display: flex; flex-direction: column; border: 1px solid #999; margin: 0 0 1px 1px; background: #fff; }
  .expand {
    height: 26px;
    flex: none;
    display: flex;
    align-items: center;
    gap: 7px;
    padding-left: 3px;
    background: #f4f4f4;
  }
  .nav-tree { flex: 1; min-height: 0; display: flex; border: 1px solid #9a9a9a; margin: 0 1px 1px; background: #fff; }
  .tree-rows { flex: 1; padding-top: 1px; position: relative; }
  .grp { position: relative; }
  .grow { height: 16px; display: flex; align-items: center; padding-left: 6px; }
  .chev { flex: none; width: 9px; }
  .grow .ic { margin-left: 7px; }
  .gname { margin-left: 4px; font-size: 12.500px; line-height: 14px; }
  .grp.haskids::before {
    content: "";
    position: absolute;
    left: 11px;
    top: 8px;
    bottom: -8px;
    border-left: 1px dotted #777;
  }
  .grp:nth-child(3)::before { bottom: 8px; }
  .kid { position: relative; height: 16px; display: flex; align-items: center; padding-left: 39px; }
  .kid::before {
    content: "";
    position: absolute;
    left: 31px;
    top: -4px;
    bottom: 0;
    border-left: 1px dotted #777;
  }
  .kid.last::before { bottom: 8px; }
  .hook { position: absolute; left: 32px; top: 8px; width: 9px; border-top: 1px dotted #777; }
  .kbody { position: relative; display: flex; align-items: center; gap: 5px; padding: 0 1px 0 3px; height: 16px; white-space: nowrap; }
  .kbody.cur { background: #d9d9d9; }
  .ktext { font-size: 12px; }

  .sb { flex: none; display: flex; flex-direction: column; align-items: center; justify-content: space-between; background: #f0f0f0; padding: 6px 0; box-sizing: border-box; }
  .sb-track { flex: 1; width: 100%; position: relative; margin: 6px 0; }
  .sb-thumb { position: absolute; left: 0; right: 0; bottom: 0; background: #cdcdcd; }
  .nav-sb { width: 15px; margin-right: 3px; }
  .nav-sb .sb-thumb { top: 157px; }
  .list-sb { width: 16px; }
  .list-sb .sb-thumb { top: 43px; }

  /* middle column */
  .mid { width: 364px; flex: none; display: flex; flex-direction: column; }
  .mid-tools { height: 29px; flex: none; display: flex; align-items: center; padding-left: 4px; gap: 7px; white-space: nowrap; }
  .mtool { display: flex; align-items: center; gap: 4px; }
  .new-t { gap: 5px; }
  .new-t .caret { margin-left: -1px; }
  .del-t { gap: 6px; margin-left: -2px; }
  .mid-tools .sep { margin: 0 -3px 0 0; }
  .mid-tools .sep2 { margin-left: -3px; }
  .floor-l { margin-left: -2px; }
  .floor {
    width: 62px;
    height: 24px;
    margin-left: -1px;
    box-sizing: border-box;
    display: flex;
    align-items: center;
    justify-content: space-between;
    padding: 0 3px;
    background: #f8f8f8;
  }
  .mid-cols { flex: 1; min-height: 0; display: flex; }
  .list { width: 182px; flex: none; margin-left: 1px; display: flex; flex-direction: column; }
  .search { height: 29px; flex: none; padding-bottom: 2px; box-sizing: border-box; display: flex; align-items: flex-end; gap: 5px; }
  .search svg { margin-bottom: 3px; }
  .search-in {
    width: 157px;
    height: 23px;
    box-sizing: border-box;
    border: 1px solid #8d8d8d;
    background: #fff;
    color: #8a8a8a;
    padding: 2px 2px;
    font-size: 12.500px;
  }
  .list-body { flex: 1; min-height: 0; margin-bottom: 3px; display: flex; border: 1px solid #9a9a9a; background: #fff; }
  .zrows { flex: 1; padding-top: 1px; }
  .zrow { position: relative; height: 16px; display: flex; align-items: center; padding-left: 40px; }
  .zrow::before { content: ""; position: absolute; left: 31px; top: -2px; bottom: 0; border-left: 1px dotted #777; }
  .zrow.lastz::before { bottom: 8px; }
  .zrow .hook { left: 32px; width: 9px; }
  .zbody { width: 68px; height: 16px; box-sizing: border-box; padding-left: 4px; display: flex; align-items: center; gap: 7px; }
  .zname { line-height: 16px; }
  .zsel { background: #2f68c5; }

  .props { width: 173px; flex: none; margin: 0 0 0 8px; display: flex; flex-direction: column; }
  .tabline { height: 20px; flex: none; display: flex; align-items: flex-end; padding-left: 1px; border-bottom: 1px solid #d0d0d0; }
  .ptab { width: 58px; height: 20px; text-align: center; line-height: 18px; background: #fff; border: 1px solid #d0d0d0; border-bottom: none; box-sizing: border-box; font-size: 12.500px; }
  .ptable { flex: 1; margin: 2px 0 6px 2px; background: #fff; border: 1px solid #999; }
  .prow { height: 19px; display: flex; box-sizing: border-box; border-bottom: 1px solid #cfcfcf; background: #fff; }
  .phead { height: 25px; background: #f0f0f0; border-bottom: none; padding-bottom: 1px; }
  .pno { width: 21px; flex: none; box-sizing: border-box; border-right: 1px solid #cfcfcf; background: #f2f2f2; text-align: center; line-height: 18px; font-family: "Liberation Sans", sans-serif; }
  .phead .pno { background: #f0f0f0; }
  .psel { background: #ffcf8f; color: #6a0f6a; }
  .pname { flex: 1; display: flex; align-items: center; padding-left: 20px; white-space: nowrap; overflow: hidden; font-size: 12.500px; position: relative; }
  .phead .pname { padding-left: 71px; }
  .pcur { background: #0078d7; color: #fff; }
  .blue { color: #0000e6; }
  .grey { color: #8a8a8a; }
  .unit { font: 9px "DejaVu Sans Mono", monospace; }
  .plus {
    position: absolute;
    left: 3px;
    top: 4px;
    width: 11px;
    height: 11px;
    box-sizing: border-box;
    border: 1px solid #c8c8c8;
    background:
      linear-gradient(#222, #222) center / 7px 1px no-repeat,
      linear-gradient(#222, #222) center / 1px 7px no-repeat;
  }

  /* editor window */
  .editor { width: 827px; flex: none; display: flex; flex-direction: column; background: linear-gradient(#a9c7e8, #bdd2ea); }
  .ed-title { height: 13px; flex: none; padding-left: 8px; line-height: 6px; color: #111; overflow: hidden; }
  .ed-body { flex: 1; min-height: 0; margin: 0 7px 0 8px; background: #f0f0f0; display: flex; flex-direction: column; }
  .ed-tabs { height: 21px; flex: none; display: flex; align-items: flex-end; padding-left: 2px; }
  .etab { width: 41px; height: 19px; padding-right: 4px; text-align: center; line-height: 20px; background: #ececec; border: 1px solid #d0d0d0; border-bottom: none; box-sizing: border-box; }
  .etab.on { width: 44px; height: 21px; padding-right: 7px; background: #fff; border: none; line-height: 19px; }
  .ed-pane { flex: none; border: 2px solid #d4d4d4; box-shadow: inset 0 3px 0 #fff; padding: 3px 1px 0 2px; margin: 0 2px 0 1px; }
  .ed-bar { height: 27px; display: flex; align-items: center; background: #f4f4f4; padding-left: 6px; gap: 3px; border-radius: 3px; white-space: nowrap; margin-bottom: 1px; }
  .ed-bar .sep { margin: 0; }
  .lbl { display: flex; align-items: center; gap: 4px; }
  .lead { margin-right: 5px; }
  .nudge { margin-left: -1px; }
  .manual { margin-left: 2px; }
  .caret-wrap { display: flex; margin-left: 3px; }
  .ed-bar .sep-r { margin-left: 4px; }
  .ed-bar .sep-k { margin-left: 6px; }
  .lbl.gap { margin-left: 3px; }
  .hk { margin-left: 0; }
  .del { margin-left: 6px; }
  .kind { margin-left: -2px; }
  .grey-t { color: #8c8c8c; }
  .box {
    height: 23px;
    box-sizing: border-box;
    display: flex;
    align-items: center;
    justify-content: center;
    gap: 3px;
    border: 1px solid #0078d7;
    background: #e3eff9;
  }
  .w34 { width: 34px; }
  .combo {
    width: 78px;
    height: 23px;
    box-sizing: border-box;
    display: flex;
    align-items: center;
    justify-content: space-between;
    padding: 0 4px 0 0;
    background: #fff;
    font-family: "Liberation Sans", sans-serif;
    font-size: 12px;
    margin-left: 2px;
  }
  .sel-tool { width: 51px; }
  .cap-tool { width: 75px; margin-left: 2px; gap: 4px; }

  .canvas { position: relative; width: 798px; height: 468px; border: 2px solid #f00; background: #131822; margin-top: 1px; }
  .canvas svg { display: block; }
  .len-input {
    position: absolute;
    left: 240px;
    top: 139px;
    width: 79px;
    height: 25px;
    box-sizing: border-box;
    border: 2px solid #647a8c;
    background: #fff;
    padding: 1px 0;
  }
  .len-input span {
    display: block;
    width: 9px;
    height: 17px;
    background: #0078d7;
    color: #fff;
    font: 13px/17px "Liberation Sans", sans-serif;
    text-align: center;
    border-right: 1px solid #e5772c;
  }

  .ed-bottom { height: 30px; display: flex; align-items: center; gap: 4px; padding-left: 1px; }
  .snap { height: 26px; display: flex; align-items: center; gap: 5px; background: #f6f6f6; border-radius: 3px; padding-right: 6px; }
  .snap .lbl:first-child { margin-left: 4px; }
  .orth { width: 51px; }

  .ed-status { margin-top: 2px; height: 21px; flex: none; display: flex; gap: 3px; background: #fff; border-top: 1px solid #e4e4e4; position: relative; }
  .coord { width: 97px; padding: 2px 0 0 5px; box-sizing: border-box; background: #fafafa; border-right: 1px solid #ddd; }
  .hint { padding: 2px 0 0 1px; }
  .grip { margin: 9px 0 0 auto; }

  .rim { flex: 1; background: #fff; border-left: 1px solid #2e6b72; padding-top: 52px; }
  .rim-in { height: 100%; margin-left: 1px; box-sizing: border-box; border-left: 2px solid #b8b8b8; border-top: 1px solid #c4c4c4; }

  /* status line */
  .status { height: 20px; flex: none; display: flex; gap: 2px; background: #f3f3f3; border-top: 1px solid #cfcfcf; box-sizing: border-box; }
  .cell { display: block; box-sizing: border-box; height: 19px; padding: 1px 1px 0; border: 1px solid #dedede; background: #f8f8f8; white-space: nowrap; }
  .c1 { width: 148px; }
  .c2 { width: 78px; }
  .c3 { width: 98px; }
  .c4 { width: 48px; }
  .c5 { width: 914px; }
  .c6 { flex: 1; }

  /* windows taskbar */
  .taskbar { height: 40px; flex: none; display: flex; background: #0a1016; color: #eee; }
  .start { width: 48px; flex: none; display: flex; align-items: center; justify-content: center; background: #000; }
  .tsearch { width: 344px; flex: none; display: flex; align-items: center; gap: 5px; padding-left: 9px; box-sizing: border-box; background: #2f2f2f; color: #9a9a9a; font-size: 13.500px; }
  .tmic { margin-left: auto; margin-right: 14px; }
  .tapps { display: flex; width: 553px; flex: none; }
  .tapp { width: 49.500px; flex: none; height: 40px; box-sizing: border-box; display: flex; align-items: center; justify-content: center; position: relative; }
  .shift svg { margin-left: 4px; }
  .ul::after { content: ""; position: absolute; left: 4px; right: 4px; bottom: 0; height: 2px; background: #76b9ed; }
  .act { background: #38424a; }
  .act::after { left: 0; right: 0; }
  .tray { flex: 1; display: flex; align-items: center; position: relative; }
  .cpu { width: 70px; margin-left: 36px; display: flex; flex-direction: column; align-items: center; line-height: 19px; font-size: 12.500px; }
  .trayic { margin-left: 10px; flex: none; }
  .trayic.vol { margin-left: 4px; }
  .trayic.kb { margin-left: 9px; }
  .trayic.sg { margin-left: 14px; }
  .zh { margin-left: 9px; font-size: 14px; }
  .clock { margin-left: 12px; width: 72px; display: flex; flex-direction: column; align-items: center; line-height: 19px; font-size: 12.500px; }
  .notify { position: relative; margin-left: 14px; }
  .notify b { position: absolute; left: 4px; top: 5px; width: 20px; height: 20px; line-height: 20px; border-radius: 50%; text-align: center; background: #3b3b3b; color: #fff; font-size: 12px; }

  /* overlays */
  .badge {
    position: absolute;
    left: 496px;
    top: -19px;
    width: 38px;
    height: 38px;
    box-sizing: border-box;
    padding-top: 18px;
    border-radius: 50%;
    border: 2px solid #d8d8d8;
    background: #31b24e;
    color: #fff;
    font: bold 11px/14px "Liberation Sans", sans-serif;
    text-align: center;
    box-shadow: 0 1px 3px rgba(0, 0, 0, 0.4);
  }
  .ime {
    position: absolute;
    left: 972px;
    top: 3px;
    width: 183px;
    height: 24px;
    box-sizing: border-box;
    display: flex;
    align-items: center;
    gap: 8px;
    padding-left: 32px;
    background: #fff;
    border: 1px solid #c4d3e2;
  }
  .ime-s { position: absolute; left: -1px; top: -4px; }
  .ime-z { color: #2d71b8; font-weight: bold; font-size: 15px; }
  .ime-p { color: #2d71b8; font: bold 13px/13px "Liberation Sans", sans-serif; }
</style>
